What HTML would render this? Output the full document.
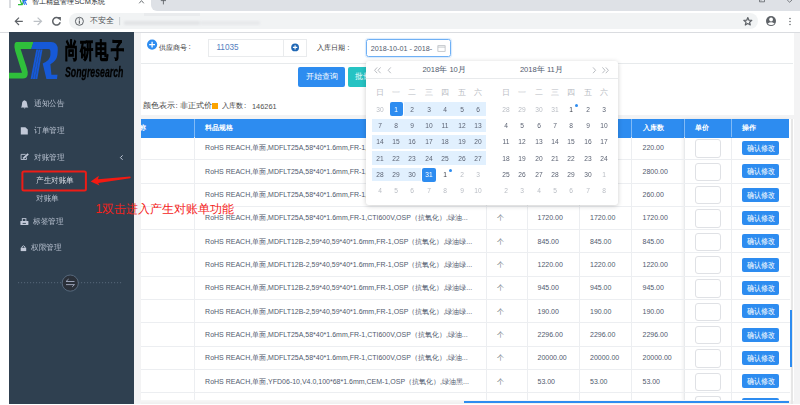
<!DOCTYPE html>
<html><head><meta charset="utf-8">
<style>
*{box-sizing:border-box;margin:0;padding:0}
html,body{width:800px;height:405px;overflow:hidden;background:#fff;font-family:"Liberation Sans",sans-serif;position:relative}
.a{position:absolute}
.t{position:absolute;white-space:nowrap;line-height:1}
/* chrome */
#tabstrip{left:151px;top:0;width:649px;height:10.75px;background:#dee1e6;border-bottom-left-radius:6px}
#toolbar{left:0;top:10.75px;width:800px;height:21.5px;background:#fff}
#omni{left:69.4px;top:13px;width:688.6px;height:16.25px;background:#f1f3f4;border-radius:8px}
#tbline{left:0;top:32px;width:800px;height:1px;background:#dadce0}
/* sidebar */
#side{left:9px;top:32.25px;width:125.25px;height:371.4px;background:#2f4050}
.nav{color:#b6bfce;font-size:7.5px;transform:scaleX(.95);transform-origin:0 0}
/* content */
#bodybg{left:134.25px;top:33px;width:665.75px;height:370.6px;background:#f3f3f4}
#panel1{left:140.75px;top:33px;width:653px;height:81.6px;background:#fff}
#panel2{left:140.75px;top:118.5px;width:653px;height:282.5px;background:#fff}
.hdr{left:140.75px;top:118.9px;width:648.55px;height:18.9px;background:#2d8cf0}
.hl{position:absolute;top:118.9px;width:1px;height:18.6px;background:rgba(255,255,255,.4)}
.vl{position:absolute;top:137.3px;width:1px;height:264px;background:#eceef1}
.rl{position:absolute;left:140.75px;width:648.85px;height:1px;background:#eceef1}
.ht{color:#fff;font-size:7px;font-weight:bold}
.ct{color:#515a6e;font-size:7px}
.btn{position:absolute;left:742px;width:37.4px;height:13.8px;background:#2d8cf0;border-radius:2px;color:#fff;font-size:7.5px;text-align:center;line-height:13.8px}
.btn span{display:inline-block;transform:scaleX(.87) translateY(0.6px)}
.inp{position:absolute;left:695.1px;width:25.5px;height:18.4px;border:0.8px solid #dfe1e5;border-radius:3px;background:#fff}
/* calendar */
#cal{left:365.9px;top:61.1px;width:252.4px;height:144.2px;background:#fff;border-radius:3px;box-shadow:0 1px 5px rgba(0,0,0,.2)}
.cd{position:absolute;width:16px;text-align:center;font-size:7.9px;color:#5d6474;line-height:1;transform:scaleX(.84)}
.cg{color:#b9bdc4}
</style></head><body>

<!-- ===== Chrome tab strip ===== -->
<div class="a" id="tabstrip"></div>
<div class="a" style="left:9px;top:0;width:2px;height:8.25px;background:#dadce0"></div>

<!-- ===== Toolbar ===== -->
<div class="a" id="toolbar"></div>
<div class="a" id="omni"></div>
<div class="a" id="tbline"></div>
<div class="t" style="left:32.4px;top:-1.6px;font-size:7.4px;color:#2a2d31">智工精益管理SCM系统</div>
<svg class="a" style="left:0;top:0" width="800" height="32" viewBox="0 0 800 32">
  <path d="M18,4.6 H21.8 L20.2,0 M22.4,4.6 L23.8,0" stroke="#2fbf3b" stroke-width="1.2" fill="none"/>
  <path d="M22.6,0 L24.6,4.8 M24.2,0 L26.6,4.8 M23.6,2.4 L26.6,0" stroke="#1d6ff0" stroke-width="1.1" fill="none"/>
  <path d="M141.5,0.6 L139.2,3.3 M141.5,0.6 L143.8,3.3" stroke="#5f6368" stroke-width="0.9"/>
  <path d="M163.4,0 V4.4 M160.8,0.6 H166" stroke="#5f6368" stroke-width="0.9"/>
  <path d="M759.5,0 V1.8 H764.5 V0 M761,0 V0.6" stroke="#5f6368" stroke-width="0.8" fill="none"/>
  <path d="M787.2,0 L789.6,2.2 L792,0" stroke="#5f6368" stroke-width="0.8" fill="none"/>
  <!-- back / forward / reload -->
  <path d="M22.8,21.3 H15.6 M19,17.6 L15.3,21.3 L19,25" stroke="#5f6368" stroke-width="1.2" fill="none"/>
  <path d="M33.6,21.3 H41.4 M37.6,17.6 L41.5,21.3 L37.6,25" stroke="#bdc1c6" stroke-width="1.2" fill="none"/>
  <path d="M59.7,19.2 A3.8,3.8 0 1 0 60.2,22.2" stroke="#5f6368" stroke-width="1.5" fill="none"/>
  <path d="M57,17 H60.9 V20.9 Z" fill="#5f6368"/>
  <!-- info -->
  <circle cx="79.4" cy="21.3" r="4" stroke="#5f6368" stroke-width="1" fill="none"/>
  <path d="M79.4,20.4 V23.8" stroke="#5f6368" stroke-width="1.2"/>
  <circle cx="79.4" cy="19" r="0.65" fill="#5f6368"/>
  <path d="M119.6,17 V25.2" stroke="#bdc1c6" stroke-width="0.7"/>
  <!-- star -->
  <path d="M747.8,17.6 L748.9,20.2 L751.8,20.4 L749.6,22.3 L750.3,25 L747.8,23.6 L745.3,25 L746,22.3 L743.8,20.4 L746.7,20.2 Z" stroke="#5f6368" stroke-width="1.2" fill="none" stroke-linejoin="round"/>
  <!-- account -->
  <circle cx="771" cy="21.1" r="5" fill="#5f6368"/>
  <circle cx="771.1" cy="19.5" r="1.9" fill="#fff"/>
  <path d="M767.6,23.7 Q771.1,20.9 774.6,23.7 Q771.1,26.2 767.6,23.7 Z" fill="#fff"/>
  <circle cx="790" cy="18.4" r="0.75" fill="#5f6368"/>
  <circle cx="790" cy="21.4" r="0.75" fill="#5f6368"/>
  <circle cx="790" cy="24.4" r="0.75" fill="#5f6368"/>
</svg>
<div class="t" style="left:90.3px;top:17.4px;font-size:8px;color:#4a4e52">不安全</div>
<div class="a" style="left:124px;top:20.5px;width:76px;height:4.5px;background:#d3d5d8;filter:blur(1px);opacity:.5"></div><div class="a" style="left:200px;top:20.5px;width:60px;height:4.5px;background:#dfe1e4;filter:blur(1px);opacity:.5"></div><div class="a" style="left:144px;top:13.4px;width:56px;height:2.6px;background:#e9ebed"></div>

<!-- ===== Sidebar ===== -->
<div class="a" id="side"></div>
<svg class="a" style="left:0;top:0" width="140" height="300" viewBox="0 0 140 300">
  <path fill="#2fbf3b" d="M16.5,42 L33.5,42 L31.3,49 L20.6,49 L26.5,67 Q28.2,72 27.6,75 Q26.8,78.5 23,78.5 L9,78.5 L9,72.7 L22,72.7 L15.2,51 Q14,46.5 14.6,44 Q15.2,42 16.5,42 Z"/>
  <path fill="#1659d8" d="M33.4,42 L51,42 Q57.8,42 57.8,50 L57.4,55 Q56.5,61 50.4,64.3 L51.4,74.7 L57.5,74.7 L57,79 L46.4,79 L42.7,63.6 Q50.4,60 50.4,55 L50.4,51 Q50.4,49 48.5,49 L31.2,49 Z"/>
  <path fill="#1659d8" d="M36.3,49.5 L38.2,49.5 L32.6,79 L30.6,79 Z M38.5,49.5 L40.3,49.5 L35,79 L32.9,79 Z M40.6,49.5 L42.5,49.5 L37.3,79 L35.3,79 Z"/>
  <!-- toggle -->
  <line x1="18" y1="282.7" x2="121.2" y2="282.7" stroke="#627284" stroke-width="0.8" stroke-dasharray="1.1 1.9"/>
  <circle cx="70.25" cy="283.1" r="8.1" fill="#2a3039" stroke="#56687c" stroke-width="1"/>
  <path d="M66,281.5 H74.5 M66,281.5 L68.6,279.1 M74.5,284.6 H66 M74.5,284.6 L72.2,286.9" stroke="#a4acc2" stroke-width="0.9" fill="none"/>
  <!-- icons -->
  <path fill="#c2c9d8" d="M24.6,100.3 Q22,101 22,104 L21.6,106.6 L20.8,107.4 L28.4,107.4 L27.6,106.6 L27.2,104 Q27.2,101 24.6,100.3 Z M23.6,107.8 Q24.6,109 25.6,107.8 Z"/>
  <path fill="#c2c9d8" d="M20.8,127.2 L25.4,127.2 L27.8,129.6 L27.8,134.5 L20.8,134.5 Z"/>
  <path fill="none" stroke="#c2c9d8" stroke-width="0.85" d="M25.6,154.4 L21.1,154.4 L21.1,159.5 L26.5,159.5 L26.5,157.4"/>
  <path fill="#c2c9d8" d="M27.6,153.3 L28.8,154.5 L24.6,158.5 L22.9,158.9 L23.3,157.3 Z"/>
  <path fill="none" stroke="#c2c9d8" stroke-width="1" d="M122.6,155.4 L120.4,157.6 L122.6,159.8"/>
  <rect x="22.3" y="218.6" width="3.6" height="3" fill="none" stroke="#c2c9d8" stroke-width="0.9"/><path fill="#c2c9d8" d="M21,221 H27.8 Q28.4,221 28.4,221.6 V224.6 Q28.4,225.1 27.8,225.1 H21 Q20.4,225.1 20.4,224.6 V221.6 Q20.4,221 21,221 Z"/><rect x="22.6" y="222.9" width="3.3" height="0.9" fill="#2f4050"/>
  <path fill="#c2c9d8" d="M20.7,247.8 H26.2 V251.1 H20.7 Z"/>
  <path fill="none" stroke="#c2c9d8" stroke-width="0.9" d="M21.9,248 V246.9 Q23.45,244.6 25,246.9 V248"/>
  <!-- red annotation -->
  <rect x="22.4" y="171.4" width="63.5" height="19.2" rx="1.5" fill="none" stroke="#ee1c16" stroke-width="2"/>
  <path fill="#f41a12" d="M90.7,181.6 L98.9,175.8 L98,179.3 L130.2,176.5 Q131.2,177.4 130.2,178.3 L98.2,183 L99.5,185.4 Z"/>
</svg>
<div class="t" style="left:65.2px;top:41.2px;font-size:21.5px;font-weight:700;color:#000;transform:scaleX(.6);transform-origin:0 0;letter-spacing:3.4px;-webkit-text-stroke:0.9px #000">尚研电子</div>
<div class="t" style="left:65.4px;top:64.6px;font-size:14.6px;font-weight:bold;font-style:italic;color:#000;transform:scaleX(.6);transform-origin:0 0;-webkit-text-stroke:0.3px #000">Songresearch</div>
<div class="t nav" style="left:33.7px;top:100px">通知公告</div>
<div class="t nav" style="left:33.5px;top:127px">订单管理</div>
<div class="t nav" style="left:33.7px;top:153.8px">对账管理</div>
<div class="t nav" style="left:36.2px;top:176.5px;color:#d8dde5">产生对账单</div>
<div class="t nav" style="left:36.2px;top:195px">对账单</div>
<div class="t nav" style="left:32.5px;top:217.5px">标签管理</div>
<div class="t nav" style="left:31.2px;top:244px">权限管理</div>

<!-- ===== Content ===== -->
<div class="a" id="bodybg"></div>
<div class="a" id="panel1"></div>
<div class="a" id="panel2"></div>
<div class="a" style="left:140.75px;top:63px;width:652.5px;height:0.8px;background:#e7eaec"></div>
<svg class="a" style="left:140px;top:32px" width="180" height="30" viewBox="140 32 180 30">
  <circle cx="152.1" cy="44.6" r="5.1" fill="#2d8cf0"/>
  <path d="M149.2,44.6 H155 M152.1,41.7 V47.5" stroke="#fff" stroke-width="1.3"/>
  <circle cx="295.1" cy="47.4" r="3.9" fill="#1f67b5"/>
  <path d="M292.9,47.4 H297.3 M295.1,45.2 V49.6" stroke="#fff" stroke-width="1.1"/>
</svg>
<div class="t" style="left:158.6px;top:43.6px;font-size:7.3px;color:#333">供应商号</div><div class="t" style="left:188.6px;top:43.4px;font-size:8px;color:#333">:</div>
<div class="a" style="left:208.4px;top:39.4px;width:98.4px;height:17.2px;border:1px solid #e9ebed;background:transparent"></div>
<div class="a" style="left:283.2px;top:39.4px;width:0.8px;height:17.2px;background:#e9ebed"></div>
<div class="t" style="left:216.4px;top:43.8px;font-size:8.2px;color:#5580c0">11035</div>
<div class="t" style="left:317.1px;top:44.1px;font-size:7.3px;color:#333">入库日期</div><div class="t" style="left:347.2px;top:43.9px;font-size:8px;color:#333">:</div>
<div class="a" style="left:365.8px;top:38.9px;width:85px;height:18.4px;border:1px solid #6fb0f5;border-radius:2.5px;box-shadow:0 0 1px 1px rgba(45,140,240,.18)"></div>
<div class="t" style="left:370.7px;top:44.6px;font-size:7.2px;color:#515a6e">2018-10-01 - 2018-</div>
<svg class="a" style="left:436px;top:42px" width="12" height="12" viewBox="0 0 12 12"><rect x="1.9" y="3.7" width="7.2" height="5.6" fill="none" stroke="#b0b4ba" stroke-width="0.7"/><path d="M1.9,5.1 H9.1" stroke="#b0b4ba" stroke-width="0.7"/></svg>
<div class="a" style="left:298px;top:67px;width:47.2px;height:19.8px;background:#2d8cf0;border-radius:2px;color:#fff;font-size:8.3px;line-height:19.8px;text-align:center">开始查询</div>
<div class="a" style="left:348.1px;top:67px;width:46px;height:19.8px;background:#26c3c3;border-radius:2px;color:#fff;font-size:8.2px;line-height:19.8px;padding-left:6.7px;overflow:hidden;white-space:nowrap">批量确认</div>
<div class="t" style="left:142.8px;top:102.3px;font-size:8px;color:#444">颜色表示</div>
<div class="t" style="left:175.6px;top:102.3px;font-size:8px;color:#444">:</div>
<div class="t" style="left:180.3px;top:102.3px;font-size:7.75px;color:#444">非正式价</div>
<div class="a" style="left:211.5px;top:103px;width:6.5px;height:6px;background:#fca400"></div>
<div class="t" style="left:221.6px;top:102.3px;font-size:7.4px;color:#444">入库数</div>
<div class="t" style="left:244px;top:102.3px;font-size:8px;color:#444">:</div>
<div class="t" style="left:252px;top:102.6px;font-size:7.4px;color:#505050">146261</div>

<!-- ===== Table header ===== -->
<div class="a hdr"></div>
<div class="hl" style="left:194.2px"></div>
<div class="hl" style="left:485.5px"></div>
<div class="hl" style="left:526.5px"></div>
<div class="hl" style="left:579.25px"></div>
<div class="hl" style="left:631.25px"></div>
<div class="hl" style="left:684.2px"></div>
<div class="hl" style="left:731.2px"></div>
<div class="a" style="left:140.75px;top:119.2px;width:53px;height:18px;overflow:hidden"><div class="t ht" style="left:-8.7px;top:4.4px">名称</div></div>
<div class="t ht" style="left:205.1px;top:123.6px">料品规格</div>
<div class="t ht" style="left:642.5px;top:123.6px">入库数</div>
<div class="t ht" style="left:695.1px;top:123.6px">单价</div>
<div class="t ht" style="left:741.9px;top:123.6px">操作</div>
<div class="vl" style="left:194.2px"></div>
<div class="vl" style="left:485.5px"></div>
<div class="vl" style="left:526.5px"></div>
<div class="vl" style="left:579.25px"></div>
<div class="vl" style="left:631.25px"></div>
<div class="vl" style="left:731.2px"></div>
<div class="a" style="left:684.2px;top:137.4px;width:105.1px;height:0.8px;background:#2d8cf0"></div>
<!-- fixed right shadow -->
<div class="a" style="left:684.2px;top:119.2px;width:105.4px;height:282.1px;box-shadow:-1px 0 3px rgba(0,0,0,.07)"></div>
<div class="a" style="left:684.2px;top:137.3px;width:1px;height:264px;background:#e8eaec"></div>
<div class="rl" style="top:159.30px"></div>
<div class="rl" style="top:182.58px"></div>
<div class="rl" style="top:205.86px"></div>
<div class="rl" style="top:229.14px"></div>
<div class="rl" style="top:252.42px"></div>
<div class="rl" style="top:275.70px"></div>
<div class="rl" style="top:298.98px"></div>
<div class="rl" style="top:322.26px"></div>
<div class="rl" style="top:345.54px"></div>
<div class="rl" style="top:368.82px"></div>
<div class="rl" style="top:392.10px"></div>
<div class="rl" style="top:415.38px"></div>
<div class="t ct" style="left:205.1px;top:144.40px">RoHS REACH,单面,MDFLT25A,58*40*1.6mm,FR-1,CTI600V,OSP（抗氧化）,绿油...</div>
<div class="t ct" style="left:497px;top:144.40px;color:#6d7380">个</div>
<div class="t ct" style="left:537.5px;top:144.40px">220.00</div>
<div class="t ct" style="left:590px;top:144.40px">220.00</div>
<div class="t ct" style="left:642.5px;top:144.40px">220.00</div>
<div class="inp" style="top:139.40px"></div>
<div class="btn" style="top:141.10px"><span>确认修改</span></div>
<div class="t ct" style="left:205.1px;top:167.73px">RoHS REACH,单面,MDFLT25A,58*40*1.6mm,FR-1,CTI600V,OSP（抗氧化）,绿油...</div>
<div class="t ct" style="left:497px;top:167.73px;color:#6d7380">个</div>
<div class="t ct" style="left:537.5px;top:167.73px">2800.00</div>
<div class="t ct" style="left:590px;top:167.73px">2800.00</div>
<div class="t ct" style="left:642.5px;top:167.73px">2800.00</div>
<div class="inp" style="top:162.73px"></div>
<div class="btn" style="top:164.43px"><span>确认修改</span></div>
<div class="t ct" style="left:205.1px;top:191.06px">RoHS REACH,单面,MDFLT25A,58*40*1.6mm,FR-1,CTI600V,OSP（抗氧化）,绿油...</div>
<div class="t ct" style="left:497px;top:191.06px;color:#6d7380">个</div>
<div class="t ct" style="left:537.5px;top:191.06px">260.00</div>
<div class="t ct" style="left:590px;top:191.06px">260.00</div>
<div class="t ct" style="left:642.5px;top:191.06px">260.00</div>
<div class="inp" style="top:186.06px"></div>
<div class="btn" style="top:187.76px"><span>确认修改</span></div>
<div class="t ct" style="left:205.1px;top:214.39px">RoHS REACH,单面,MDFLT25A,58*40*1.6mm,FR-1,CTI600V,OSP（抗氧化）,绿油...</div>
<div class="t ct" style="left:497px;top:214.39px;color:#6d7380">个</div>
<div class="t ct" style="left:537.5px;top:214.39px">1720.00</div>
<div class="t ct" style="left:590px;top:214.39px">1720.00</div>
<div class="t ct" style="left:642.5px;top:214.39px">1720.00</div>
<div class="inp" style="top:209.39px"></div>
<div class="btn" style="top:211.09px"><span>确认修改</span></div>
<div class="t ct" style="left:205.1px;top:237.72px">RoHS REACH,单面,MDFLT12B-2,59*40,59*40*1.6mm,FR-1,OSP（抗氧化）,绿油绿...</div>
<div class="t ct" style="left:497px;top:237.72px;color:#6d7380">个</div>
<div class="t ct" style="left:537.5px;top:237.72px">845.00</div>
<div class="t ct" style="left:590px;top:237.72px">845.00</div>
<div class="t ct" style="left:642.5px;top:237.72px">845.00</div>
<div class="inp" style="top:232.72px"></div>
<div class="btn" style="top:234.42px"><span>确认修改</span></div>
<div class="t ct" style="left:205.1px;top:261.05px">RoHS REACH,单面,MDFLT12B-2,59*40,59*40*1.6mm,FR-1,OSP（抗氧化）,绿油绿...</div>
<div class="t ct" style="left:497px;top:261.05px;color:#6d7380">个</div>
<div class="t ct" style="left:537.5px;top:261.05px">1220.00</div>
<div class="t ct" style="left:590px;top:261.05px">1220.00</div>
<div class="t ct" style="left:642.5px;top:261.05px">1220.00</div>
<div class="inp" style="top:256.05px"></div>
<div class="btn" style="top:257.75px"><span>确认修改</span></div>
<div class="t ct" style="left:205.1px;top:284.38px">RoHS REACH,单面,MDFLT12B-2,59*40,59*40*1.6mm,FR-1,OSP（抗氧化）,绿油绿...</div>
<div class="t ct" style="left:497px;top:284.38px;color:#6d7380">个</div>
<div class="t ct" style="left:537.5px;top:284.38px">945.00</div>
<div class="t ct" style="left:590px;top:284.38px">945.00</div>
<div class="t ct" style="left:642.5px;top:284.38px">945.00</div>
<div class="inp" style="top:279.38px"></div>
<div class="btn" style="top:281.08px"><span>确认修改</span></div>
<div class="t ct" style="left:205.1px;top:307.71px">RoHS REACH,单面,MDFLT12B-2,59*40,59*40*1.6mm,FR-1,OSP（抗氧化）,绿油绿...</div>
<div class="t ct" style="left:497px;top:307.71px;color:#6d7380">个</div>
<div class="t ct" style="left:537.5px;top:307.71px">190.00</div>
<div class="t ct" style="left:590px;top:307.71px">190.00</div>
<div class="t ct" style="left:642.5px;top:307.71px">190.00</div>
<div class="inp" style="top:302.71px"></div>
<div class="btn" style="top:304.41px"><span>确认修改</span></div>
<div class="t ct" style="left:205.1px;top:331.04px">RoHS REACH,单面,MDFLT25A,58*40*1.6mm,FR-1,CTI600V,OSP（抗氧化）,绿油...</div>
<div class="t ct" style="left:497px;top:331.04px;color:#6d7380">个</div>
<div class="t ct" style="left:537.5px;top:331.04px">2296.00</div>
<div class="t ct" style="left:590px;top:331.04px">2296.00</div>
<div class="t ct" style="left:642.5px;top:331.04px">2296.00</div>
<div class="inp" style="top:326.04px"></div>
<div class="btn" style="top:327.74px"><span>确认修改</span></div>
<div class="t ct" style="left:205.1px;top:354.37px">RoHS REACH,单面,MDFLT25A,58*40*1.6mm,FR-1,CTI600V,OSP（抗氧化）,绿油...</div>
<div class="t ct" style="left:497px;top:354.37px;color:#6d7380">个</div>
<div class="t ct" style="left:537.5px;top:354.37px">20000.00</div>
<div class="t ct" style="left:590px;top:354.37px">20000.00</div>
<div class="t ct" style="left:642.5px;top:354.37px">20000.00</div>
<div class="inp" style="top:349.37px"></div>
<div class="btn" style="top:351.07px"><span>确认修改</span></div>
<div class="t ct" style="left:205.1px;top:377.70px">RoHS REACH,单面,YFD06-10,V4.0,100*68*1.6mm,CEM-1,OSP（抗氧化）,绿油黑...</div>
<div class="t ct" style="left:497px;top:377.70px;color:#6d7380">个</div>
<div class="t ct" style="left:537.5px;top:377.70px">53.00</div>
<div class="t ct" style="left:590px;top:377.70px">53.00</div>
<div class="t ct" style="left:642.5px;top:377.70px">53.00</div>
<div class="inp" style="top:372.70px"></div>
<div class="btn" style="top:374.40px"><span>确认修改</span></div>
<div class="inp" style="top:396.03px;height:5.3px;border-bottom:none;border-radius:3px 3px 0 0"></div>
<div class="btn" style="top:397.73px;height:3px;border-radius:2px 2px 0 0;color:transparent"></div>
<!-- scrollbars -->
<div class="a" style="left:140.75px;top:400px;width:652px;height:3.6px;background:linear-gradient(#f7f7f7,#efefef)"></div>
<div class="a" style="left:463.6px;top:401.4px;width:325.6px;height:2px;background:#2d8cf0"></div>
<div class="a" style="left:791.2px;top:118.5px;width:1.6px;height:285px;background:#e6e6e6"></div>
<div class="a" style="left:789.6px;top:309.6px;width:2.3px;height:57px;background:#2d8cf0"></div>

<!-- ===== Calendar ===== -->
<div class="a" id="cal"></div>
<div class="a" style="left:365.9px;top:78.2px;width:252.4px;height:0.8px;background:#e8eaec"></div>
<div class="t" style="left:422.4px;top:66.2px;font-size:7.6px;color:#515a6e">2018年 10月</div>
<div class="t" style="left:519.9px;top:66.2px;font-size:7.6px;color:#515a6e">2018年 11月</div>
<svg class="a" style="left:366px;top:62px" width="252" height="16" viewBox="366 62 252 16">
<path d="M377.2,67.4 L374.6,70.3 L377.2,73.2 M380.6,67.4 L378,70.3 L380.6,73.2 M390.8,67.4 L388.2,70.3 L390.8,73.2 M593,67.4 L595.6,70.3 L593,73.2 M602.4,67.4 L605,70.3 L602.4,73.2 M605.8,67.4 L608.4,70.3 L605.8,73.2" fill="none" stroke="#a8acb3" stroke-width="0.8"/>
</svg>
<div class="cd cg" style="left:371.50px;top:88.85px;transform:none;font-size:7.6px">日</div>
<div class="cd cg" style="left:497.90px;top:88.85px;transform:none;font-size:7.6px">日</div>
<div class="cd cg" style="left:387.90px;top:88.85px;transform:none;font-size:7.6px">一</div>
<div class="cd cg" style="left:514.23px;top:88.85px;transform:none;font-size:7.6px">一</div>
<div class="cd cg" style="left:404.30px;top:88.85px;transform:none;font-size:7.6px">二</div>
<div class="cd cg" style="left:530.56px;top:88.85px;transform:none;font-size:7.6px">二</div>
<div class="cd cg" style="left:420.70px;top:88.85px;transform:none;font-size:7.6px">三</div>
<div class="cd cg" style="left:546.89px;top:88.85px;transform:none;font-size:7.6px">三</div>
<div class="cd cg" style="left:437.10px;top:88.85px;transform:none;font-size:7.6px">四</div>
<div class="cd cg" style="left:563.22px;top:88.85px;transform:none;font-size:7.6px">四</div>
<div class="cd cg" style="left:453.50px;top:88.85px;transform:none;font-size:7.6px">五</div>
<div class="cd cg" style="left:579.55px;top:88.85px;transform:none;font-size:7.6px">五</div>
<div class="cd cg" style="left:469.90px;top:88.85px;transform:none;font-size:7.6px">六</div>
<div class="cd cg" style="left:595.88px;top:88.85px;transform:none;font-size:7.6px">六</div>
<div class="a" style="left:404.3px;top:102.4px;width:81.6px;height:13.9px;background:#e1f0fe"></div>
<div class="a" style="left:372.2px;top:118.75px;width:113.7px;height:13.7px;background:#e1f0fe"></div>
<div class="a" style="left:372.2px;top:135.10px;width:113.7px;height:13.7px;background:#e1f0fe"></div>
<div class="a" style="left:372.2px;top:151.45px;width:113.7px;height:13.7px;background:#e1f0fe"></div>
<div class="a" style="left:372.2px;top:167.80px;width:48.6px;height:13.7px;background:#e1f0fe"></div>
<div class="a" style="left:389.5px;top:102.4px;width:13.6px;height:13.9px;background:#2d8cf0;border-radius:2px"></div>
<div class="a" style="left:422.3px;top:167.80px;width:13.6px;height:13.9px;background:#2d8cf0;border-radius:2px"></div>
<div class="cd cg" style="left:371.50px;top:105.70px">30</div>
<div class="cd " style="left:387.90px;top:105.70px;color:#fff">1</div>
<div class="cd " style="left:404.30px;top:105.70px">2</div>
<div class="cd " style="left:420.70px;top:105.70px">3</div>
<div class="cd " style="left:437.10px;top:105.70px">4</div>
<div class="cd " style="left:453.50px;top:105.70px">5</div>
<div class="cd " style="left:469.90px;top:105.70px">6</div>
<div class="cd " style="left:371.50px;top:122.05px">7</div>
<div class="cd " style="left:387.90px;top:122.05px">8</div>
<div class="cd " style="left:404.30px;top:122.05px">9</div>
<div class="cd " style="left:420.70px;top:122.05px">10</div>
<div class="cd " style="left:437.10px;top:122.05px">11</div>
<div class="cd " style="left:453.50px;top:122.05px">12</div>
<div class="cd " style="left:469.90px;top:122.05px">13</div>
<div class="cd " style="left:371.50px;top:138.40px">14</div>
<div class="cd " style="left:387.90px;top:138.40px">15</div>
<div class="cd " style="left:404.30px;top:138.40px">16</div>
<div class="cd " style="left:420.70px;top:138.40px">17</div>
<div class="cd " style="left:437.10px;top:138.40px">18</div>
<div class="cd " style="left:453.50px;top:138.40px">19</div>
<div class="cd " style="left:469.90px;top:138.40px">20</div>
<div class="cd " style="left:371.50px;top:154.75px">21</div>
<div class="cd " style="left:387.90px;top:154.75px">22</div>
<div class="cd " style="left:404.30px;top:154.75px">23</div>
<div class="cd " style="left:420.70px;top:154.75px">24</div>
<div class="cd " style="left:437.10px;top:154.75px">25</div>
<div class="cd " style="left:453.50px;top:154.75px">26</div>
<div class="cd " style="left:469.90px;top:154.75px">27</div>
<div class="cd " style="left:371.50px;top:171.10px">28</div>
<div class="cd " style="left:387.90px;top:171.10px">29</div>
<div class="cd " style="left:404.30px;top:171.10px">30</div>
<div class="cd " style="left:420.70px;top:171.10px;color:#fff">31</div>
<div class="cd " style="left:437.10px;top:171.10px;color:#3a3f4a">1</div>
<div class="cd cg" style="left:453.50px;top:171.10px">2</div>
<div class="cd cg" style="left:469.90px;top:171.10px">3</div>
<div class="cd cg" style="left:371.50px;top:187.45px">4</div>
<div class="cd cg" style="left:387.90px;top:187.45px">5</div>
<div class="cd cg" style="left:404.30px;top:187.45px">6</div>
<div class="cd cg" style="left:420.70px;top:187.45px">7</div>
<div class="cd cg" style="left:437.10px;top:187.45px">8</div>
<div class="cd cg" style="left:453.50px;top:187.45px">9</div>
<div class="cd cg" style="left:469.90px;top:187.45px">10</div>
<div class="cd cg" style="left:497.90px;top:105.70px">28</div>
<div class="cd cg" style="left:514.23px;top:105.70px">29</div>
<div class="cd cg" style="left:530.56px;top:105.70px">30</div>
<div class="cd cg" style="left:546.89px;top:105.70px">31</div>
<div class="cd " style="left:563.22px;top:105.70px;color:#3a3f4a">1</div>
<div class="cd " style="left:579.55px;top:105.70px">2</div>
<div class="cd " style="left:595.88px;top:105.70px">3</div>
<div class="cd " style="left:497.90px;top:122.05px">4</div>
<div class="cd " style="left:514.23px;top:122.05px">5</div>
<div class="cd " style="left:530.56px;top:122.05px">6</div>
<div class="cd " style="left:546.89px;top:122.05px">7</div>
<div class="cd " style="left:563.22px;top:122.05px">8</div>
<div class="cd " style="left:579.55px;top:122.05px">9</div>
<div class="cd " style="left:595.88px;top:122.05px">10</div>
<div class="cd " style="left:497.90px;top:138.40px">11</div>
<div class="cd " style="left:514.23px;top:138.40px">12</div>
<div class="cd " style="left:530.56px;top:138.40px">13</div>
<div class="cd " style="left:546.89px;top:138.40px">14</div>
<div class="cd " style="left:563.22px;top:138.40px">15</div>
<div class="cd " style="left:579.55px;top:138.40px">16</div>
<div class="cd " style="left:595.88px;top:138.40px">17</div>
<div class="cd " style="left:497.90px;top:154.75px">18</div>
<div class="cd " style="left:514.23px;top:154.75px">19</div>
<div class="cd " style="left:530.56px;top:154.75px">20</div>
<div class="cd " style="left:546.89px;top:154.75px">21</div>
<div class="cd " style="left:563.22px;top:154.75px">22</div>
<div class="cd " style="left:579.55px;top:154.75px">23</div>
<div class="cd " style="left:595.88px;top:154.75px">24</div>
<div class="cd " style="left:497.90px;top:171.10px">25</div>
<div class="cd " style="left:514.23px;top:171.10px">26</div>
<div class="cd " style="left:530.56px;top:171.10px">27</div>
<div class="cd " style="left:546.89px;top:171.10px">28</div>
<div class="cd " style="left:563.22px;top:171.10px">29</div>
<div class="cd " style="left:579.55px;top:171.10px">30</div>
<div class="cd cg" style="left:595.88px;top:171.10px">1</div>
<div class="cd cg" style="left:497.90px;top:187.45px">2</div>
<div class="cd cg" style="left:514.23px;top:187.45px">3</div>
<div class="cd cg" style="left:530.56px;top:187.45px">4</div>
<div class="cd cg" style="left:546.89px;top:187.45px">5</div>
<div class="cd cg" style="left:563.22px;top:187.45px">6</div>
<div class="cd cg" style="left:579.55px;top:187.45px">7</div>
<div class="cd cg" style="left:595.88px;top:187.45px">8</div>
<div class="a" style="left:448.50px;top:169.00px;width:3.2px;height:3.2px;border-radius:50%;background:#2d8cf0"></div>
<div class="a" style="left:574.62px;top:103.60px;width:3.2px;height:3.2px;border-radius:50%;background:#2d8cf0"></div>

<!-- red annotation text -->
<div class="t" style="left:95.6px;top:203.4px;font-size:12px;color:#f5221b">1双击进入产生对账单功能</div>
</body></html>
